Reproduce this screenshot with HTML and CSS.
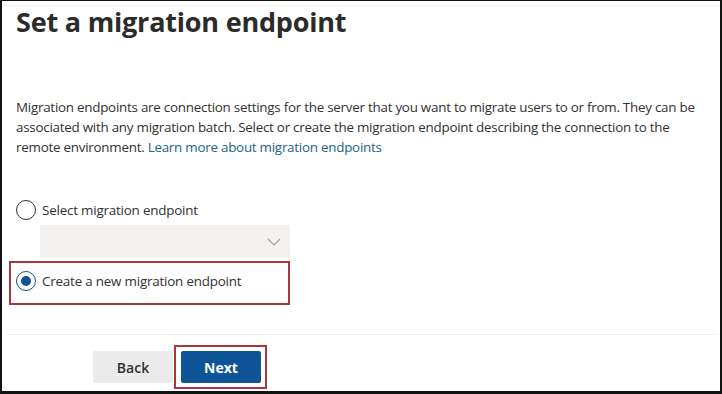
FILE: index.html
```html
<!DOCTYPE html>
<html lang="en">
<head>
  <meta charset="UTF-8" />
  <title>Set a migration endpoint</title>
  <link rel="stylesheet" href="styles.css">
</head>
<body>
  <div class="frame">
    <div class="panel">
      <h1 class="title">Set a migration endpoint</h1>

      <p class="intro">
        Migration endpoints are connection settings for the server that you want to migrate users to or from. They can be
        associated with any migration batch. Select or create the migration endpoint describing the connection to the
        remote environment. <a href="#" class="link">Learn more about migration endpoints</a>
      </p>

      <div class="choices">
        <label class="choice">
          <span class="radio"></span>
          <span>Select migration endpoint</span>
        </label>

        <div class="dropdown">
          <svg class="chevron" width="14" height="8" viewBox="0 0 14 8">
            <path d="M1 1 L7 7 L13 1" fill="none" stroke="#a19f9d" stroke-width="1.1" />
          </svg>
        </div>

        <div class="highlight">
          <label class="choice">
            <span class="radio checked"></span>
            <span>Create a new migration endpoint</span>
          </label>
        </div>
      </div>
    </div>

    <!-- Footer -->
    <div class="footer">
      <button class="btn btn-back">Back</button>
      <div class="highlight-btn">
        <button class="btn btn-next">Next</button>
      </div>
    </div>
  </div>
</body>
</html>
```

FILE: styles.css
```css
* {
  box-sizing: border-box;
}

body {
  margin: 0;
  background: white;
  font-family: 'Open Sans', 'Noto Sans', Arial, sans-serif;
  color: #323130;
}

.frame {
  width: 722px;
  height: 394px;
  border-top: 1px solid #111;
  border-left: 2px solid #111;
  border-right: 2px solid #111;
  border-bottom: 3px solid #111;
  display: flex;
  flex-direction: column;
  overflow: hidden;
}

.panel {
  margin-top: 4px;
  border-top: 1px solid #f1f1f1;
  flex: 1;
  padding: 0 0 0 14px;
}

.title {
  margin: 0;
  font-size: 27px;
  font-weight: 700;
  line-height: 32px;
  color: #2b2b2b;
  letter-spacing: -0.2px;
}

.intro {
  margin: 59px 0 0;
  font-size: 13.4px;
  line-height: 20px;
  letter-spacing: -0.25px;
  padding-right: 4px;
}

.link {
  color: #206487;
  text-decoration: none;
}

.choices {
  margin-top: 41px;
  display: flex;
  flex-direction: column;
}

.choice {
  display: flex;
  align-items: center;
  gap: 6px;
  font-size: 13.4px;
  letter-spacing: -0.2px;
  height: 24px;
}

.radio {
  width: 20px;
  height: 20px;
  border: 1px solid #323130;
  border-radius: 50%;
  background: white;
  display: flex;
  align-items: center;
  justify-content: center;
}

.radio.checked {
  border-color: #1d4f7a;
}

.radio.checked::after {
  content: "";
  width: 10px;
  height: 10px;
  border-radius: 50%;
  background: #0f5493;
}

.dropdown {
  margin: 3px 0 0 24px;
  width: 250px;
  height: 33px;
  background: #f3f2f1;
  display: flex;
  align-items: center;
  justify-content: flex-end;
  padding-right: 9px;
}

.highlight {
  margin: 3px 0 0 -7px;
  width: 281px;
  height: 44px;
  border: 2px solid #a8373b;
  padding: 6px 0 0 5px;
}

/* Footer */
.footer {
  margin: 0 5px 0 5px;
  border-top: 1px solid #ebebeb;
  height: 57px;
  display: flex;
  align-items: flex-start;
  padding: 10px 0 0 86px;
}

.btn {
  width: 80px;
  height: 32px;
  border: none;
  border-radius: 2px;
  font-family: 'Open Sans', 'Noto Sans', Arial, sans-serif;
  font-size: 14px;
  font-weight: 600;
  cursor: pointer;
}

.btn-back {
  margin-top: 6px;
  background: #ebebeb;
  color: #323130;
}

.highlight-btn {
  margin-left: 1px;
  border: 2px solid #a8373b;
  padding: 4px 4px 4px 5px;
}

.btn-next {
  display: block;
  background: #0f5497;
  color: white;
  font-weight: 700;
}
```
